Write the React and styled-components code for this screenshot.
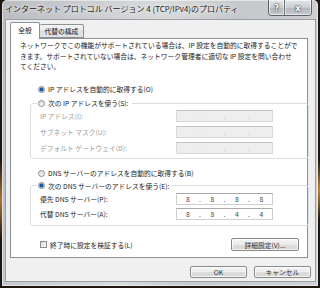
import React from "react"
import styled, { createGlobalStyle } from "styled-components"

const GlobalStyle = createGlobalStyle`
  html, body {
    margin: 0;
    padding: 0;
    background: #1b140f;
  }
  * {
    box-sizing: border-box;
  }
`

const Desktop = styled.div`
  width: 320px;
  height: 288px;
  padding: 0 2px 2px 2px;
  font-family: "Noto Sans CJK JP", "Noto Sans", sans-serif;
  background:
    radial-gradient(ellipse 6px 40px at 1px 200px, #b07a3a, transparent),
    radial-gradient(ellipse 6px 30px at 319px 190px, #c08a40, transparent),
    #1e1711;
`

const Window = styled.div`
  height: 100%;
  display: flex;
  flex-direction: column;
  padding: 0 2px 4px 3px;
  background: linear-gradient(
    100deg,
    #b9bcc0 0%,
    #cfd1d4 30%,
    #d8dadc 45%,
    #c6c9cc 65%,
    #d0d2d5 100%
  );
  border-radius: 5px 5px 0 0;
  box-shadow: inset 0 0 0 1px rgba(255, 255, 255, 0.5);
`

const TitleBar = styled.div`
  height: 19px;
  display: flex;
  align-items: flex-start;
  margin: 0 -2px 0 -3px;
`

const Title = styled.div`
  padding-left: 3px;
  font-size: 8px;
  line-height: 18px;
  color: #1a1a1a;
  white-space: nowrap;
  text-shadow: 0 0 6px #fff, 0 0 3px #fff;
`

const Captions = styled.div`
  margin-left: auto;
  margin-right: 6px;
  display: flex;
  height: 16px;
  border: 1px solid #5d6168;
  border-top: none;
  border-radius: 0 0 4px 4px;
  overflow: hidden;
`

const CaptionButton = styled.div`
  width: ${p => p.$w}px;
  height: 100%;
  display: flex;
  align-items: center;
  justify-content: center;
  background: linear-gradient(#e4e6e9, #c9ccd1 50%, #b3b7bd 51%, #c5c9ce);
  border-left: ${p => (p.$first ? "none" : "1px solid #6b6f76")};
  box-shadow: inset 0 0 0 1px rgba(255, 255, 255, 0.55);
  color: #fff;
  font-family: "DejaVu Sans", sans-serif;
  font-weight: bold;
  font-size: ${p => p.$fs}px;
  text-shadow: 0 0 1px #222, 0 0 2px #333;
`

const Client = styled.div`
  flex: 1;
  display: flex;
  flex-direction: column;
  padding: 2px 4px 0 4px;
  background: #f0f0f0;
  border: 1px solid #9b9ea3;
`

const Tabs = styled.div`
  height: 16px;
  display: flex;
  align-items: flex-end;
`

const Tab = styled.div`
  position: relative;
  z-index: ${p => (p.$active ? 1 : 0)};
  width: ${p => p.$w}px;
  height: ${p => (p.$active ? 17 : 14)}px;
  margin-bottom: ${p => (p.$active ? -1 : 0)}px;
  border: 1px solid #8d9098;
  border-bottom: ${p => (p.$active ? "none" : "1px solid #8d9098")};
  border-left: ${p => (p.$active ? "1px solid #8d9098" : "none")};
  border-radius: 2px 2px 0 0;
  background: ${p =>
    p.$active ? "#fff" : "linear-gradient(#f5f5f5, #e6e6e6 50%, #dcdcdc 51%, #e4e4e4)"};
  font-size: 6.75px;
  line-height: ${p => (p.$active ? 15 : 13)}px;
  text-align: center;
  color: #222;
`

const Panel = styled.div`
  height: 220px;
  margin-right: 3px;
  padding: 1px 0 0 9px;
  background: #fff;
  border: 1px solid #8d9098;
  font-size: 6.75px;
  color: #222;
`

const Para = styled.p`
  margin: 0;
  line-height: 10.5px;
  white-space: nowrap;
`

const RadioRow = styled.div`
  display: flex;
  align-items: center;
  gap: 3px;
  height: 11px;
  margin-top: ${p => p.$top || 0}px;
  padding-left: ${p => (p.$legend ? 1 : 18)}px;
  padding-right: ${p => (p.$legend ? 3 : 0)}px;
  color: #222;
`

const Radio = styled.span`
  width: 7px;
  height: 7px;
  flex: none;
  border-radius: 50%;
  border: 1px solid #8b8d90;
  background: ${p =>
    p.$checked
      ? "radial-gradient(circle, #1b5ca6 0 1.4px, #6fa6d8 2px, #eef2f6 3px)"
      : "linear-gradient(#d8d8d8, #f7f7f7)"};
`

const Group = styled.fieldset`
  width: 279px;
  margin: ${p => p.$top}px 0 0 10px;
  padding: ${p => p.$pt}px 0 ${p => p.$pb}px 9px;
  border: 1px solid #d5dfe5;
  border-radius: 3px;
  display: flex;
  flex-direction: column;
  gap: ${p => p.$gap}px;
`

const Legend = styled.legend`
  margin-left: -3px;
  padding: 0;
`

const FieldRow = styled.div`
  display: grid;
  grid-template-columns: 136px 97px;
  align-items: center;
  height: 12px;
  color: ${p => (p.$disabled ? "#9a9a9a" : "#222")};
`

const IpField = styled.div`
  display: grid;
  grid-template-columns: 1fr 3px 1fr 3px 1fr 3px 1fr;
  height: 12px;
  border: 1px solid ${p => (p.$disabled ? "#dadada" : "#cfcfcf")};
  border-top-color: ${p => (p.$disabled ? "#c4c4c4" : "#a9a9a9")};
  background: ${p => (p.$disabled ? "#eeeeee" : "#fff")};
  color: ${p => (p.$disabled ? "#b5b5b5" : "#444")};
  line-height: 10px;
  text-align: center;
`

const BottomRow = styled.div`
  display: flex;
  align-items: center;
  margin: 12px 8px 0 20px;
`

const Check = styled.span`
  width: 7px;
  height: 7px;
  margin-right: 3px;
  border: 1px solid #8e8f91;
  background: linear-gradient(135deg, #dcdcdc, #f8f8f8);
`

const Button = styled.div`
  width: ${p => p.$w}px;
  height: ${p => p.$h}px;
  margin-left: ${p => (p.$push ? "auto" : "0")};
  display: flex;
  align-items: center;
  justify-content: center;
  border: 1px solid #8a8a8a;
  border-radius: 2px;
  background: linear-gradient(#f4f4f4, #ececec 50%, #dedede 51%, #d6d6d6);
  box-shadow: inset 0 0 0 1px rgba(255, 255, 255, 0.7);
  font-size: 6.75px;
  color: #333;
`

const Footer = styled.div`
  display: flex;
  justify-content: flex-end;
  gap: 7px;
  margin-top: 8px;
`

function Ip({ values, disabled }) {
  const v = values || ["", "", "", ""]
  return (
    <IpField $disabled={disabled}>
      <span>{v[0]}</span>
      <span>.</span>
      <span>{v[1]}</span>
      <span>.</span>
      <span>{v[2]}</span>
      <span>.</span>
      <span>{v[3]}</span>
    </IpField>
  )
}

export default function App() {
  return (
    <>
      <GlobalStyle />
      <Desktop>
        <Window>
          <TitleBar>
            <Title>インターネット プロトコル バージョン 4 (TCP/IPv4)のプロパティ</Title>
            <Captions>
              <CaptionButton $w={15} $fs={9} $first>?</CaptionButton>
              <CaptionButton $w={27} $fs={9}>x</CaptionButton>
            </Captions>
          </TitleBar>
          <Client>
            <Tabs>
              <Tab $active $w={30}>全般</Tab>
              <Tab $w={44}>代替の構成</Tab>
            </Tabs>
            <Panel>
              <Para>
                ネットワークでこの機能がサポートされている場合は、IP 設定を自動的に取得することがで
                <br />
                きます。サポートされていない場合は、ネットワーク管理者に適切な IP 設定を問い合わせ
                <br />
                てください。
              </Para>
              <RadioRow $top={12}>
                <Radio $checked />
                IP アドレスを自動的に取得する(O)
              </RadioRow>
              <Group $top={3} $pt={1.5} $pb={4} $gap={4}>
                <Legend>
                  <RadioRow $legend>
                    <Radio />
                    次の IP アドレスを使う(S):
                  </RadioRow>
                </Legend>
                <FieldRow $disabled>
                  <span>IP アドレス(I):</span>
                  <Ip disabled />
                </FieldRow>
                <FieldRow $disabled>
                  <span>サブネット マスク(U):</span>
                  <Ip disabled />
                </FieldRow>
                <FieldRow $disabled>
                  <span>デフォルト ゲートウェイ(D):</span>
                  <Ip disabled />
                </FieldRow>
              </Group>
              <RadioRow $top={8.5}>
                <Radio />
                DNS サーバーのアドレスを自動的に取得する(B)
              </RadioRow>
              <Group $top={1.5} $pt={2} $pb={5} $gap={3}>
                <Legend>
                  <RadioRow $legend>
                    <Radio $checked />
                    次の DNS サーバーのアドレスを使う(E):
                  </RadioRow>
                </Legend>
                <FieldRow>
                  <span>優先 DNS サーバー(P):</span>
                  <Ip values={["8", "8", "8", "8"]} />
                </FieldRow>
                <FieldRow>
                  <span>代替 DNS サーバー(A):</span>
                  <Ip values={["8", "8", "4", "4"]} />
                </FieldRow>
              </Group>
              <BottomRow>
                <Check />
                終了時に設定を検証する(L)
                <Button $push $w={68} $h={13}>詳細設定(V)...</Button>
              </BottomRow>
            </Panel>
            <Footer>
              <Button $w={57} $h={12}>OK</Button>
              <Button $w={57} $h={12}>キャンセル</Button>
            </Footer>
          </Client>
        </Window>
      </Desktop>
    </>
  )
}
